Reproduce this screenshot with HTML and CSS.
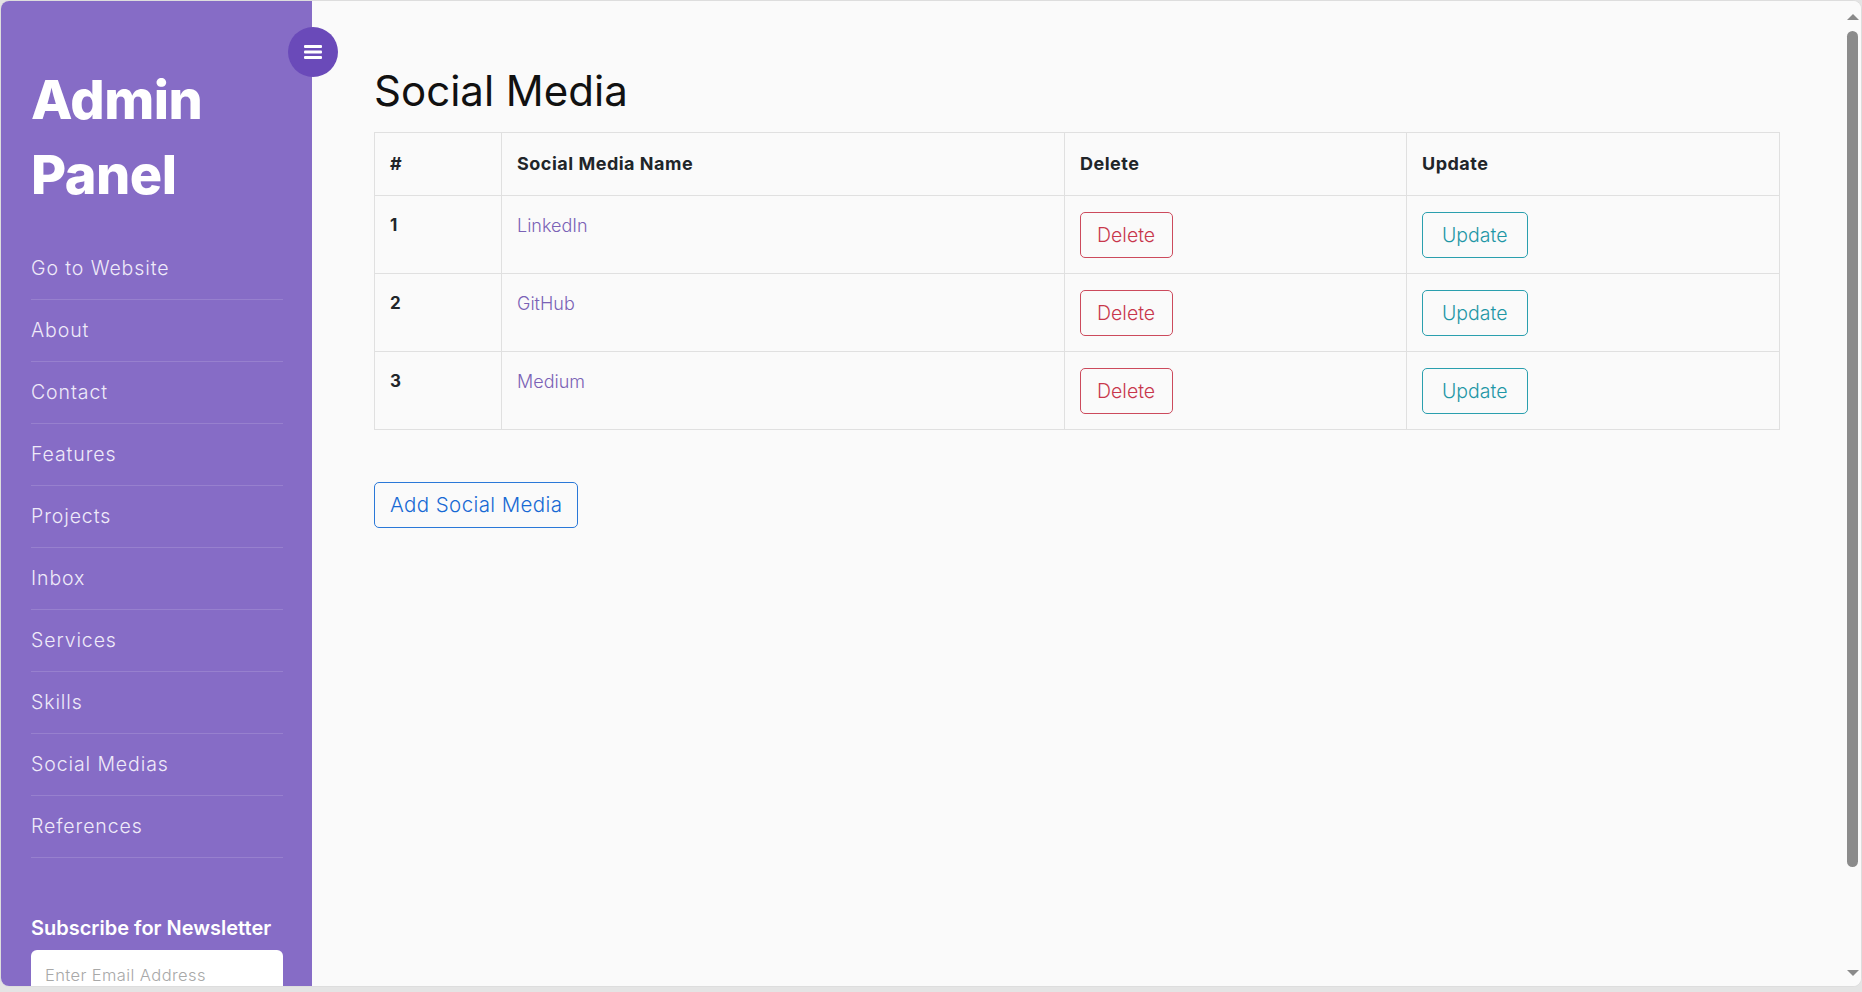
FILE: index.html
```html
<!DOCTYPE html>
<html lang="en">
<head>
<meta charset="utf-8">
<title>Admin Panel - Social Media</title>
<link rel="stylesheet" href="styles.css">
</head>
<body>
<div class="window">
  <aside class="sidebar">
    <h1 class="brand">Admin<br>Panel</h1>
    <nav class="nav">
      <a href="#">Go to Website</a>
      <a href="#">About</a>
      <a href="#">Contact</a>
      <a href="#">Features</a>
      <a href="#">Projects</a>
      <a href="#">Inbox</a>
      <a href="#">Services</a>
      <a href="#">Skills</a>
      <a href="#">Social Medias</a>
      <a href="#">References</a>
    </nav>
    <div class="newsletter">
      <h3 class="newsletter-title">Subscribe for Newsletter</h3>
      <input class="newsletter-input" type="text" placeholder="Enter Email Address">
    </div>
  </aside>
  <button class="toggle" type="button" aria-label="Toggle menu">
    <svg width="18" height="16" viewBox="0 0 18 16"><rect x="0" y="1" width="18" height="3" rx="1" fill="#fff"/><rect x="0" y="6.5" width="18" height="3" rx="1" fill="#fff"/><rect x="0" y="12" width="18" height="3" rx="1" fill="#fff"/></svg>
  </button>
  <main class="content">
    <h2 class="page-title">Social Media</h2>
    <table class="grid">
      <colgroup>
        <col class="c-num"><col class="c-name"><col class="c-del"><col class="c-upd">
      </colgroup>
      <thead>
        <tr><th>#</th><th>Social Media Name</th><th>Delete</th><th>Update</th></tr>
      </thead>
      <tbody>
        <tr><th>1</th><td><a class="name" href="#">LinkedIn</a></td><td><a class="btn btn-del" href="#">Delete</a></td><td><a class="btn btn-upd" href="#">Update</a></td></tr>
        <tr><th>2</th><td><a class="name" href="#">GitHub</a></td><td><a class="btn btn-del" href="#">Delete</a></td><td><a class="btn btn-upd" href="#">Update</a></td></tr>
        <tr><th>3</th><td><a class="name" href="#">Medium</a></td><td><a class="btn btn-del" href="#">Delete</a></td><td><a class="btn btn-upd" href="#">Update</a></td></tr>
      </tbody>
    </table>
    <a class="btn btn-add" href="#">Add Social Media</a>
  </main>
  <div class="scrollbar">
    <span class="arrow arrow-up"></span>
    <span class="thumb"></span>
    <span class="arrow arrow-down"></span>
  </div>
</div>
</body>
</html>
```

FILE: styles.css
```css
* { box-sizing: border-box; }
html, body { margin: 0; padding: 0; }
body {
  background: #e4e4e4;
  font-family: Inter, "Noto Sans", sans-serif;
  height: 992px;
  overflow: hidden;
}
.window {
  position: relative;
  display: flex;
  height: 987px;
  background: #fafafa;
  border: 1px solid #dddddd;
  border-radius: 9px;
  overflow: hidden;
}
.sidebar {
  flex: 0 0 311px;
  background: #866cc6;
  padding: 61px 29px 0 30px;
  color: #fff;
}
.brand {
  margin: 0 0 26px;
  font-size: 54px;
  line-height: 75px;
  font-weight: 800;
  letter-spacing: -0.5px;
  color: #fff;
}
.nav { display: flex; flex-direction: column; }
.nav a {
  display: block;
  padding: 17px 0;
  line-height: 27px;
  font-size: 19.5px;
  letter-spacing: 0.9px;
  font-weight: 300;
  color: #efeaf9;
  text-decoration: none;
  border-bottom: 1px solid rgba(255,255,255,0.14);
}
.newsletter { margin-top: 56px; }
.newsletter-title {
  margin: 0 0 8px;
  font-size: 20px;
  line-height: 28px;
  font-weight: 600;
  color: #fff;
}
.newsletter-input {
  display: block;
  width: 100%;
  height: 50px;
  border: none;
  border-radius: 6px;
  padding: 0 14px;
  font-family: inherit;
  font-size: 16.5px;
  letter-spacing: 0.4px;
  font-weight: 300;
  background: #fff;
}
.newsletter-input::placeholder { color: #a8a8a8; }
.toggle {
  position: absolute;
  left: 287px;
  top: 26px;
  width: 50px;
  height: 50px;
  border: none;
  border-radius: 50%;
  background: #6a4ab9;
  display: flex;
  align-items: center;
  justify-content: center;
  padding: 0;
}
.content {
  flex: 1;
  padding: 65px 64px 0 62px;
}
.page-title {
  margin: 0 0 16px;
  font-size: 42px;
  line-height: 50px;
  font-weight: 400;
  color: #111;
}
.grid {
  width: 100%;
  border-collapse: collapse;
  table-layout: fixed;
  border: 1px solid #e0e0e0;
  margin-bottom: 52px;
}
.c-num { width: 127px; }
.c-name { width: 563px; }
.c-del { width: 342px; }
.grid th, .grid td {
  border: 1px solid #e0e0e0;
  padding: 16px 15px 15px;
  text-align: left;
  vertical-align: top;
  color: #212529;
}
.grid thead th {
  padding: 16px 15px;
  font-size: 18px;
  letter-spacing: 0.5px;
  line-height: 30px;
  font-weight: 700;
}
.grid tbody th {
  font-size: 17px;
  font-weight: 700;
  line-height: 27px;
}
.grid tbody td { font-size: 17px; line-height: 27px; }
.name {
  color: #7b62b6;
  text-decoration: none;
  font-weight: 300;
  font-size: 18px;
}
.btn {
  display: inline-block;
  border: 1px solid;
  border-radius: 5px;
  padding: 7px 16px;
  font-size: 19.5px;
  line-height: 30px;
  font-weight: 300;
  text-decoration: none;
  background: transparent;
}
.btn-del { color: #c8374c; border-color: #cc4a5c; padding: 7px 17px 7px 16px; }
.btn-upd { color: #1f97a6; border-color: #2a9fae; padding: 7px 19px; }
.btn-add {
  color: #1769d4;
  border-color: #2a78d8;
  padding: 7px 15px;
  font-size: 20.5px;
  letter-spacing: 0.4px;
}
.scrollbar {
  flex: 0 0 17px;
  display: flex;
  flex-direction: column;
  align-items: center;
  padding: 13px 0 10px;
  background: #fafafa;
}
.arrow {
  width: 0;
  height: 0;
  border-left: 6px solid transparent;
  border-right: 6px solid transparent;
}
.arrow-up { border-bottom: 6px solid #8a8a8a; }
.arrow-down { border-top: 6px solid #8a8a8a; margin-top: auto; }
.thumb {
  width: 11px;
  height: 836px;
  margin-top: 11px;
  border-radius: 6px;
  background: #8b8b8b;
}
```
